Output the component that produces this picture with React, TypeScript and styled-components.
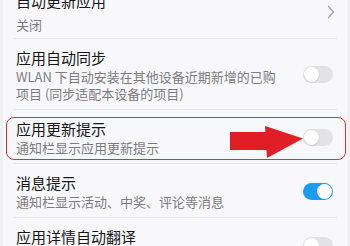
import styled, { createGlobalStyle } from "styled-components";

const GlobalStyle = createGlobalStyle`
  html, body {
    margin: 0;
    padding: 0;
    background: #eef0f2;
    overflow: hidden;
  }
  body {
    font-family: "Noto Sans CJK SC", "Noto Sans", sans-serif;
  }
`;

const settings = [
  { title: "自动更新应用", desc: "关闭", control: "chevron" },
  {
    title: "应用自动同步",
    desc: "WLAN 下自动安装在其他设备近期新增的已购项目 (同步适配本设备的项目)",
    control: "off",
  },
  { title: "应用更新提示", desc: "通知栏显示应用更新提示", control: "off", marked: true },
  { title: "消息提示", desc: "通知栏显示活动、中奖、评论等消息", control: "on" },
  { title: "应用详情自动翻译", desc: "", control: "off" },
];

const Chevron = () => (
  <svg width="8" height="14" viewBox="0 0 8 14">
    <path d="M1.5 1.5 L6.5 7 L1.5 12.5" fill="none" stroke="#a3a3a6" strokeWidth="1.3" strokeLinecap="round" strokeLinejoin="round" />
  </svg>
);

const Arrow = () => (
  <ArrowSvg width="74" height="34" viewBox="0 0 74 34">
    <rect x="0" y="6" width="37" height="18" fill="#e11d25" />
    <polygon points="35,0 73,12.5 37,32" fill="#e11d25" />
  </ArrowSvg>
);

export default function App() {
  return (
    <>
      <GlobalStyle />
      <Page>
        <Card>
          {settings.map((s, i) => {
            const nav = s.control === "chevron";
            return (
              <Row key={s.title} nav={nav} last={i === settings.length - 1}>
                <TextBlock>
                  <Title>{s.title}</Title>
                  {s.desc && <Desc nav={nav}>{s.desc}</Desc>}
                </TextBlock>
                {nav ? (
                  <ChevronBox>
                    <Chevron />
                  </ChevronBox>
                ) : (
                  <Switch on={s.control === "on"}>
                    <Knob on={s.control === "on"} />
                  </Switch>
                )}
                {s.marked && (
                  <>
                    <Highlight />
                    <Arrow />
                  </>
                )}
              </Row>
            );
          })}
        </Card>
      </Page>
    </>
  );
}

const Page = styled.div`
  width: 350px;
  height: 246px;
  overflow: hidden;
`;

const Card = styled.div`
  margin: -14px 3px 0;
  padding: 0 10px;
  background: #f8f8fa;
`;

const Row = styled.div<{ last?: boolean; nav?: boolean }>`
  position: relative;
  display: flex;
  align-items: center;
  gap: 19px;
  min-height: 38px;
  padding: ${(p) => (p.nav ? "4px 4px 5px 3px" : "8px 4px 7px 3px")};
  border-bottom: ${(p) => (p.last ? "none" : "1px solid #e7e7ea")};
`;

const TextBlock = styled.div`
  flex: 1;
  min-width: 0;
  align-self: flex-start;
`;

const Title = styled.div`
  font-size: 15px;
  line-height: 21px;
  color: #161618;
`;

const Desc = styled.div<{ nav?: boolean }>`
  margin-top: ${(p) => (p.nav ? "5px" : "0")};
  font-size: 13px;
  line-height: 17px;
  color: #7d7d80;
`;

const ChevronBox = styled.div`
  width: 30px;
  display: flex;
  justify-content: flex-end;
  margin-right: -2px;
`;

const Switch = styled.div<{ on?: boolean }>`
  flex: none;
  width: 30px;
  height: 17px;
  border-radius: 9px;
  background: ${(p) => (p.on ? "#1a9cf0" : "#e3e3e6")};
  display: flex;
  align-items: center;
  justify-content: ${(p) => (p.on ? "flex-end" : "flex-start")};
  padding: 0 1px;
  box-sizing: border-box;
`;

const Knob = styled.div<{ on?: boolean }>`
  width: 15px;
  height: 15px;
  border-radius: 50%;
  background: #ffffff;
  box-shadow: ${(p) => (p.on ? "none" : "0 0.5px 1.5px rgba(0,0,0,0.18)")};
`;

const Highlight = styled.div`
  position: absolute;
  top: 7px;
  bottom: 3px;
  left: -7px;
  right: -9px;
  border: 1.5px solid #c9363d;
  border-radius: 8px;
  pointer-events: none;
`;

const ArrowSvg = styled.svg`
  position: absolute;
  left: 217px;
  top: 16px;
`;
